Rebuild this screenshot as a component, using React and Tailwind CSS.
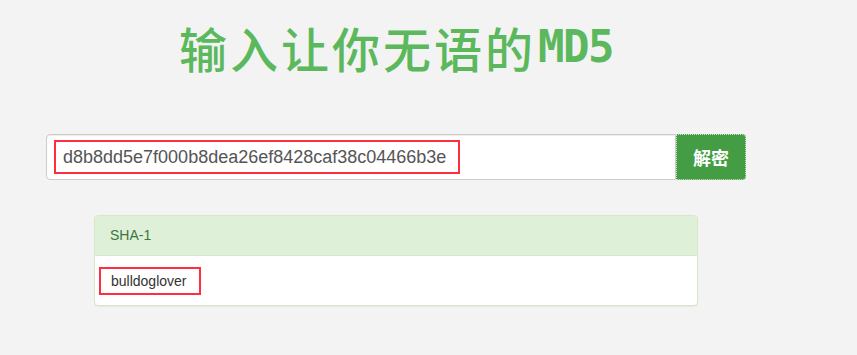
export default function App() {
  return (
    <div className="min-h-[355px] w-full bg-[#f3f3f3]" style={{ fontFamily: '"Liberation Sans", Arial, sans-serif' }}>
      <div className="w-[792px] flex flex-col items-center">
        <h1 className="mt-[17px] h-[60px] flex items-center text-[#5cb85c] leading-none whitespace-nowrap">
          <span className="text-[48px] font-medium tracking-[3px]" style={{ fontFamily: '"Noto Sans CJK SC", sans-serif' }}>输入让你无语的</span>
          <span className="text-[44px] font-bold tracking-[-1.5px] ml-[2px]" style={{ fontFamily: '"DejaVu Sans Mono", monospace' }}>MD5</span>
        </h1>
        <div className="mt-[57px] flex w-[700px] h-[46px]">
          <div className="flex-1 flex items-center bg-white border border-[#ccc] rounded-l-[4px] pl-[7px] shadow-[inset_0_1px_1px_rgba(0,0,0,0.075)]">
            <span className="border-2 border-[#ff2e3e] h-[34px] flex items-center pl-[7px] pr-[12px] text-[18px] text-[#555]">d8b8dd5e7f000b8dea26ef8428caf38c04466b3e</span>
          </div>
          <button className="w-[70px] h-[46px] bg-[#449d44] text-white text-[18px] font-bold rounded-r-[4px] outline outline-1 outline-dotted outline-[#cfe8cf] -outline-offset-1" style={{ fontFamily: '"Noto Sans CJK SC", sans-serif' }}>解密</button>
        </div>
        <div className="mt-[35px] w-[604px] bg-white border border-[#d6e9c6] rounded-[4px] shadow-[0_1px_1px_rgba(0,0,0,0.05)]">
          <div className="h-[40px] bg-[#dff0d8] border-b border-[#d6e9c6] px-[15px] flex items-center text-[14px] text-[#3c763d] rounded-t-[3px]">SHA-1</div>
          <div className="pt-[11px] pb-[10px] pl-[4px]">
            <span className="inline-flex items-center h-[28px] border-2 border-[#ff2e3e] pl-[10px] pr-[12px] text-[14px] text-[#333]">bulldoglover</span>
          </div>
        </div>
      </div>
    </div>
  );
}
